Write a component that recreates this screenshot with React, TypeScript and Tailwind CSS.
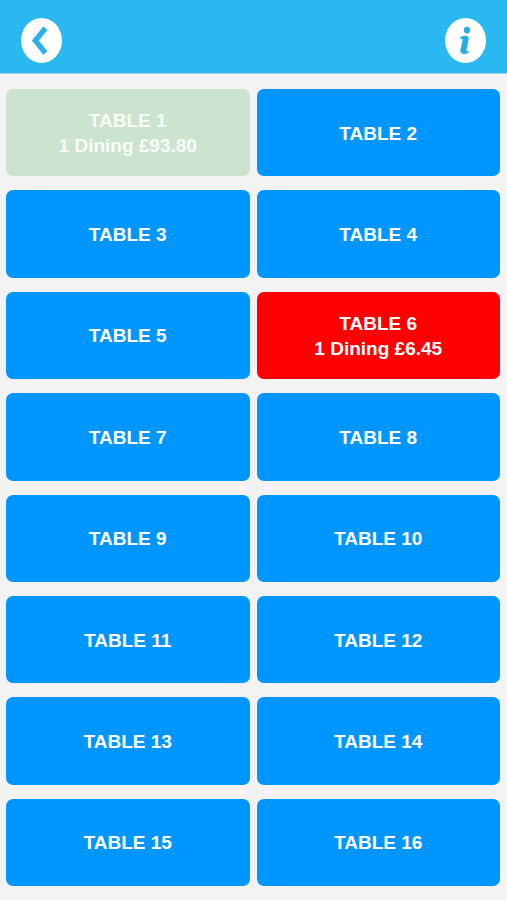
import React from 'react';

type Table = {
    number: number;
    detail?: string;
    color: string;
}

const tables: Table[] = [];
for (let n = 1; n <= 16; n++) {
    tables.push({ number: n, color: 'bg-[#0096ff] text-white' });
}
tables[0] = { number: 1, detail: '1 Dining £93.80', color: 'bg-[#cbe3cf] text-[#f8fdf8]' };
tables[5] = { number: 6, detail: '1 Dining £6.45', color: 'bg-[#ff0000] text-white' };

export default function App() {
    return (
        <div className="flex min-h-screen flex-col bg-[#f3f3f3] font-['Liberation_Sans',Arial,sans-serif]">
            <Header />
            <main className="grid flex-1 auto-rows-fr grid-cols-2 gap-x-[7px] gap-y-[14px] pt-[15px] pr-[7px] pb-[14px] pl-[6px]">
                {tables.map((t) => (
                    <TableButton key={t.number} table={t} />
                ))}
            </main>
        </div>
    )
}

function Header() {
    return (
        <header className="flex items-center justify-between border-b border-[#a9cfe0] bg-[#29b9f0] px-[21px] pt-[18px] pb-[10px]">
            <button type="button" aria-label="Back" className="block">
                <svg width="41" height="45" viewBox="0 0 41 45" className="block">
                    <ellipse cx="20.5" cy="22.5" rx="20.5" ry="22.5" fill="#fff" />
                    <path d="M24.4 10.2 L14.3 22.5 L24.4 35" fill="none" stroke="#29b3e8" strokeWidth="5.4" />
                </svg>
            </button>
            <button type="button" aria-label="Information" className="block">
                <svg width="41" height="45" viewBox="0 0 41 45" className="block">
                    <ellipse cx="20.5" cy="22.5" rx="20.5" ry="22.5" fill="#fff" />
                    <ellipse cx="22" cy="12.1" rx="3.2" ry="3.4" fill="#29addf" />
                    <path
                        d="M14.6 20.6 C15.6 18.4 18 17.8 20.3 17.8 C23.4 17.8 24 19.6 23.5 22.2 L21.6 31 C21.3 32.8 21.7 33.4 22.6 33.3 C23.3 33.2 23.8 32.9 24.5 32.7 C23.7 35.3 21.6 36 18.8 36 C15.8 36 14.9 34.3 15.5 31.6 L17.4 23 C17.7 21.5 17.5 20.9 16.7 20.8 C16 20.7 15.3 20.8 14.6 20.6 Z"
                        fill="#29addf"
                    />
                </svg>
            </button>
        </header>
    )
}

function TableButton(props: { table: Table }) {
    const { number, detail, color } = props.table;

    return (
        <button
            type="button"
            className={`flex flex-col items-center justify-center rounded-[7px] pt-px text-[19px] leading-[25px] font-bold ${color}`}
        >
            <span>TABLE {number}</span>
            {detail && <span>{detail}</span>}
        </button>
    )
}
